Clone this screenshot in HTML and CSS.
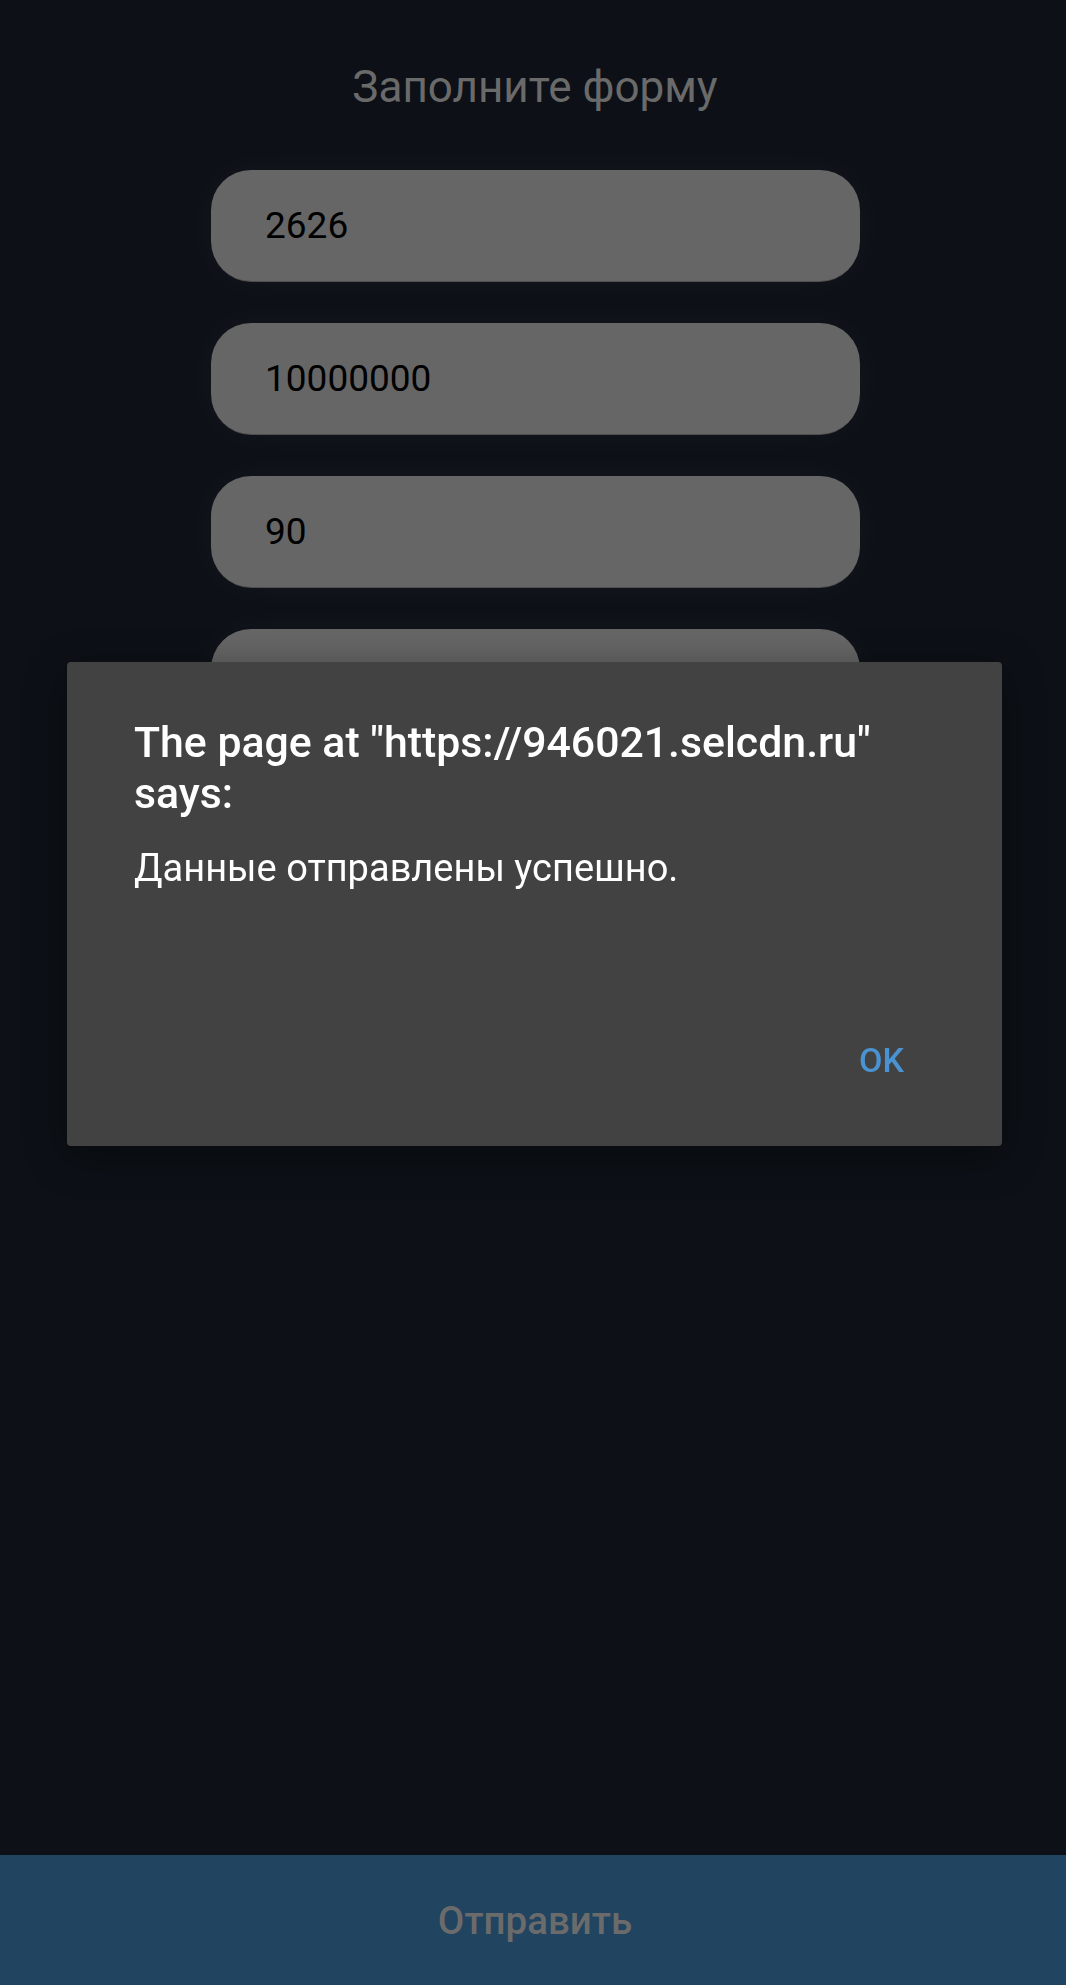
FILE: index.html
```html
<!DOCTYPE html>
<html lang="ru">
<head>
<meta charset="utf-8">
<title>Форма</title>
<link rel="stylesheet" href="styles.css">
</head>
<body class="page">
  <main class="form">
    <h1 class="title">Заполните форму</h1>
    <input class="field" type="text" value="2626">
    <input class="field" type="text" value="10000000">
    <input class="field" type="text" value="90">
    <input class="field" type="text" value="">
  </main>
  <button class="submit" type="button">Отправить</button>

  <div class="scrim">
    <div class="dialog" role="alertdialog">
      <h2 class="dialog-title">The page at "https://946021.selcdn.ru" says:</h2>
      <p class="dialog-message">Данные отправлены успешно.</p>
      <div class="dialog-actions">
        <button class="dialog-ok" type="button">OK</button>
      </div>
    </div>
  </div>
</body>
</html>
```

FILE: styles.css
```css
* { box-sizing: border-box; }

html, body { height: 100%; }

.page {
  margin: 0;
  min-height: 100vh;
  background: #0d1117;
  font-family: Roboto, "Noto Sans", "Liberation Sans", sans-serif;
  display: flex;
  flex-direction: column;
}

.form {
  display: flex;
  flex-direction: column;
  align-items: center;
  padding-top: 62px;
  padding-left: 4px;
  gap: 42px;
}

.title {
  margin: 0 0 15px;
  font-size: 44px;
  font-weight: 400;
  line-height: 51px;
  color: #6a6a6a;
}

.field {
  width: 649px;
  height: 111px;
  margin-left: 1px;
  border: none;
  border-radius: 40px;
  background: #666666;
  padding: 0 54px;
  font-family: Roboto, "Noto Sans", sans-serif;
  font-size: 37px;
  color: #000;
  box-shadow: 0 2px 0 -1px #4e4e4e, 0 0 40px rgba(255, 255, 255, 0.035);
  outline: none;
}

.submit {
  margin-top: auto;
  height: 130px;
  width: 100%;
  border: none;
  background: #214460;
  color: #6b6b6b;
  font-family: Roboto, "Noto Sans", sans-serif;
  font-size: 38.5px;
  font-weight: 500;
  padding: 0 0 0 4px;
}

.scrim {
  position: fixed;
  inset: 0;
}

.dialog {
  position: absolute;
  left: 67px;
  top: 662px;
  width: 935px;
  background: #424242;
  border-radius: 4px;
  padding: 55px 67px 66px;
  box-shadow: 0 10px 40px rgba(0, 0, 0, 0.45);
  color: #fff;
}

.dialog-title {
  margin: 0;
  font-size: 42.8px;
  font-weight: 500;
  line-height: 51px;
}

.dialog-message {
  margin: 27px 0 0;
  font-size: 38px;
  font-weight: 400;
  line-height: 44.5px;
}

.dialog-actions {
  display: flex;
  justify-content: flex-end;
  margin-top: 149.5px;
  padding-right: 31px;
}

.dialog-ok {
  border: none;
  background: none;
  padding: 0;
  font-family: Roboto, "Noto Sans", sans-serif;
  font-size: 34px;
  font-weight: 500;
  line-height: 40px;
  color: #4a93d3;
}
```
